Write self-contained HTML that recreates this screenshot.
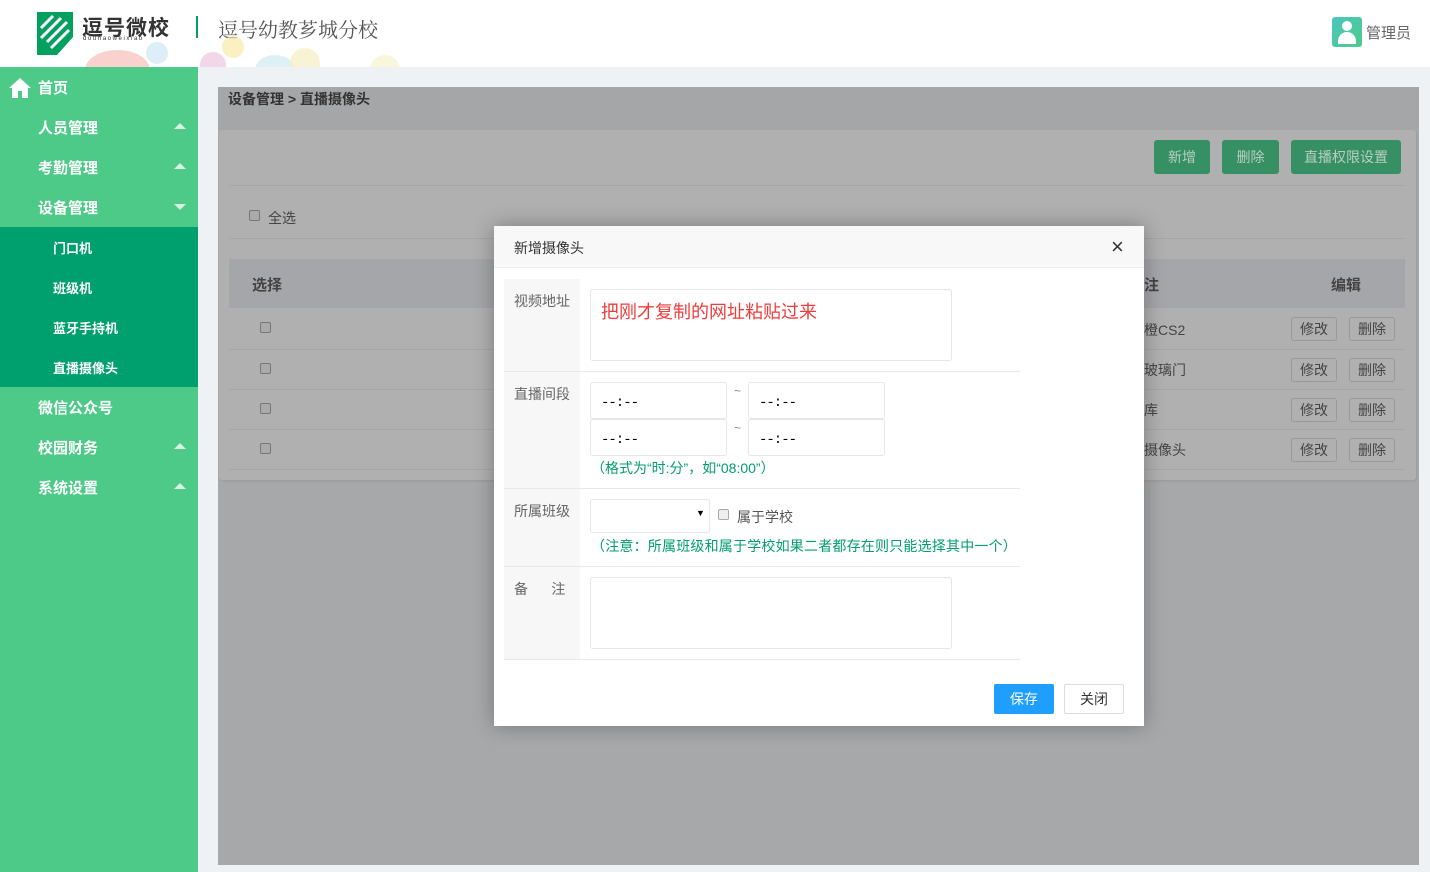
<!DOCTYPE html>
<html><head><meta charset="utf-8"><style>
*{margin:0;padding:0;box-sizing:border-box}
body{width:1430px;height:872px;overflow:hidden;background:#eef2f5;font-family:"Liberation Sans","Noto Sans CJK SC",sans-serif;position:relative;font-size:14px}
.a{position:absolute}
.top{left:0;top:0;width:1430px;height:67px;background:#fff;overflow:hidden}
.side{left:0;top:67px;width:198px;height:805px;background:#4dca88}
.side .it{position:absolute;left:38px;color:#fff;font-weight:bold;font-size:15px}
.side .sub{position:absolute;left:53px;color:#fff;font-weight:bold;font-size:13px}
.tri{position:absolute;left:174px;width:0;height:0;border-left:6px solid transparent;border-right:6px solid transparent}
.up{border-bottom:6px solid #d8efe2}
.dn{border-top:6px solid #d8efe2}
.ov{left:218px;top:87px;width:1201px;height:778px;background:#a6a8aa}
.cb{width:11px;height:11px;border:1px solid #777;border-radius:2px;background:#aaa}
.btnx{border:1px solid #999;border-radius:3px;color:#444;font-size:14px;text-align:center;line-height:22px;height:24px;width:46px}
.g{background:#369063;border-radius:3px;text-align:center;line-height:34px;height:34px;font-size:14px;color:#b8cfc0}
.modal{left:494px;top:226px;width:650px;height:500px;background:#fff;box-shadow:0 0 20px rgba(0,0,0,.3)}
.lab{position:absolute;left:10px;width:76px;background:#f7f7f7;color:#666;font-size:14px;padding:0 0 0 10px}
.inp{position:absolute;border:1px solid #e6e6e6;border-radius:3px;background:#fff}
.t{font-family:"Liberation Mono",monospace;font-size:14px;color:#000;padding:12px 0 0 10px;letter-spacing:-1px}
.hr{position:absolute;left:10px;width:516px;height:1px;background:#e8e8e8}
.green{color:#009e6e;font-size:14px;position:absolute}
</style></head><body>
<div class="a top">
<svg class="a" style="left:37px;top:12px" width="36" height="43" viewBox="0 0 36 43"><polygon points="0,0 36,0 36,25 20,43 0,43" fill="#04a060"/><path d="M4 16 L16 4 M4 26 L24 6 M10 30 L30 10 M14 36 L32 18" stroke="#fff" stroke-width="3"/></svg>
<div class="a" style="left:82px;top:12px;font-size:21px;font-weight:bold;color:#333;letter-spacing:1px">逗号微校</div>
<div class="a" style="left:83px;top:36px;font-size:6px;color:#333;letter-spacing:1.6px">douhaoweixiao</div>
<div class="a" style="left:196px;top:16px;width:2px;height:22px;background:#04a060"></div>
<div class="a" style="left:218px;top:14px;font-size:20px;color:#555;font-family:'Liberation Serif','Noto Serif CJK SC',serif">逗号幼教芗城分校</div>
<div class="a" style="left:85px;top:50px;width:65px;height:40px;border-radius:50%;background:#f5b4b0;opacity:.6"></div>
<div class="a" style="left:146px;top:42px;width:22px;height:22px;border-radius:50%;background:#cde7f5;opacity:.7"></div>
<div class="a" style="left:200px;top:52px;width:26px;height:26px;border-radius:50%;background:#ecc6e0;opacity:.7"></div>
<div class="a" style="left:222px;top:36px;width:22px;height:22px;border-radius:50%;background:#f8eaa8;opacity:.7"></div>
<div class="a" style="left:255px;top:55px;width:40px;height:30px;border-radius:50%;background:#cfe9f2;opacity:.7"></div>
<div class="a" style="left:290px;top:48px;width:30px;height:30px;border-radius:50%;background:#f5f0c0;opacity:.7"></div>
<div class="a" style="left:370px;top:55px;width:30px;height:30px;border-radius:50%;background:#f6f3cc;opacity:.7"></div>
<div class="a" style="left:1332px;top:17px;width:30px;height:30px;border-radius:3px;background:linear-gradient(135deg,#4cc6c0,#4dca88);overflow:hidden"><div class="a" style="left:10px;top:4px;width:10px;height:10px;border-radius:50%;background:#fff"></div><div class="a" style="left:6px;top:15px;width:18px;height:12px;border-radius:9px 9px 0 0;background:#fff"></div></div>
<div class="a" style="left:1366px;top:22px;font-size:15px;color:#666">管理员</div>
</div>
<div class="a side">
<svg class="a" style="left:8px;top:10px" width="24" height="22" viewBox="0 0 24 22"><path d="M12 1 L1 11 L4 11 L4 21 L10 21 L10 14 L14 14 L14 21 L20 21 L20 11 L23 11 Z" fill="#fff"/></svg>
<div class="it" style="top:10px">首页</div>
<div class="it" style="top:50px">人员管理</div><div class="tri up" style="top:56px"></div>
<div class="it" style="top:90px">考勤管理</div><div class="tri up" style="top:96px"></div>
<div class="it" style="top:130px">设备管理</div><div class="tri dn" style="top:137px"></div>
<div class="a" style="left:0;top:160px;width:198px;height:160px;background:#00a06e"></div>
<div class="sub" style="top:171px">门口机</div>
<div class="sub" style="top:211px">班级机</div>
<div class="sub" style="top:251px">蓝牙手持机</div>
<div class="sub" style="top:291px">直播摄像头</div>
<div class="it" style="top:330px">微信公众号</div>
<div class="it" style="top:370px">校园财务</div><div class="tri up" style="top:376px"></div>
<div class="it" style="top:410px">系统设置</div><div class="tri up" style="top:416px"></div>
</div>
<div class="a ov">
<div class="a" style="left:0;top:0;width:1201px;height:42px;background:#a4a6a8"></div>
<div class="a" style="left:10px;top:2px;font-size:14px;font-weight:bold;color:#333">设备管理 &gt; 直播摄像头</div>
<div class="a" style="left:1px;top:43px;width:1197px;height:350px;background:#b0b0b0;border-radius:3px;box-shadow:1px 1px 2px #999"></div>
<div class="a g" style="left:936px;top:53px;width:56px">新增</div>
<div class="a g" style="left:1004px;top:53px;width:57px">删除</div>
<div class="a g" style="left:1073px;top:53px;width:110px">直播权限设置</div>
<div class="a" style="left:11px;top:98px;width:1176px;height:1px;background:#a6a6a6"></div>
<div class="a cb" style="left:31px;top:123px"></div>
<div class="a" style="left:50px;top:121px;color:#444">全选</div>
<div class="a" style="left:11px;top:151px;width:1176px;height:1px;background:#a6a6a6"></div>
<div class="a" style="left:11px;top:172px;width:1176px;height:49px;background:#a5a6a9"></div>
<div class="a" style="left:34px;top:187px;font-weight:bold;color:#444;font-size:15px">选择</div>
<div class="a" style="left:926px;top:187px;font-weight:bold;color:#444;font-size:15px">注</div>
<div class="a" style="left:1113px;top:187px;font-weight:bold;color:#444;font-size:15px">编辑</div>
<div class="a" style="left:11px;top:262px;width:1176px;height:1px;background:#a6a6a6"></div>
<div class="a" style="left:11px;top:302px;width:1176px;height:1px;background:#a6a6a6"></div>
<div class="a" style="left:11px;top:342px;width:1176px;height:1px;background:#a6a6a6"></div>
<div class="a" style="left:11px;top:382px;width:1176px;height:1px;background:#a6a6a6"></div>
<div class="a cb" style="left:42px;top:235px"></div><div class="a cb" style="left:42px;top:276px"></div><div class="a cb" style="left:42px;top:316px"></div><div class="a cb" style="left:42px;top:356px"></div>
<div class="a" style="left:926px;top:233px;color:#444">橙CS2</div>
<div class="a" style="left:926px;top:273px;color:#444">玻璃门</div>
<div class="a" style="left:926px;top:313px;color:#444">库</div>
<div class="a" style="left:926px;top:353px;color:#444">摄像头</div>
<div class="a btnx" style="left:1073px;top:230px">修改</div><div class="a btnx" style="left:1131px;top:230px">删除</div>
<div class="a btnx" style="left:1073px;top:271px">修改</div><div class="a btnx" style="left:1131px;top:271px">删除</div>
<div class="a btnx" style="left:1073px;top:311px">修改</div><div class="a btnx" style="left:1131px;top:311px">删除</div>
<div class="a btnx" style="left:1073px;top:351px">修改</div><div class="a btnx" style="left:1131px;top:351px">删除</div>
</div>
<div class="a modal">
<div class="a" style="left:0;top:0;width:650px;height:42px;background:#f8f8f8;border-bottom:1px solid #eee"></div>
<div class="a" style="left:20px;top:12px;color:#333">新增摄像头</div>
<div class="a" style="left:617px;top:8px;font-size:22px;color:#333">×</div>
<div class="lab" style="top:53px;height:92px;padding-top:12px">视频地址</div>
<div class="inp" style="left:96px;top:63px;width:362px;height:72px"></div>
<div class="a" style="left:107px;top:72px;color:#f03c3c;font-size:18px">把刚才复制的网址粘贴过来</div>
<div class="hr" style="top:145px"></div>
<div class="lab" style="top:146px;height:116px;padding-top:12px">直播间段</div>
<div class="inp t" style="left:96px;top:156px;width:137px;height:37px">--:--</div>
<div class="a" style="left:240px;top:158px;color:#888;font-size:12px">~</div>
<div class="inp t" style="left:254px;top:156px;width:137px;height:37px">--:--</div>
<div class="inp t" style="left:96px;top:193px;width:137px;height:37px">--:--</div>
<div class="a" style="left:240px;top:195px;color:#888;font-size:12px">~</div>
<div class="inp t" style="left:254px;top:193px;width:137px;height:37px">--:--</div>
<div class="green" style="left:97px;top:232px">（格式为“时:分”，如“08:00”）</div>
<div class="hr" style="top:262px"></div>
<div class="lab" style="top:263px;height:77px;padding-top:12px">所属班级</div>
<div class="inp" style="left:96px;top:273px;width:120px;height:34px"></div>
<div class="a" style="left:202px;top:282px;font-size:9px">▼</div>
<div class="a cb" style="left:224px;top:283px;background:#eee;border-color:#aaa"></div>
<div class="a" style="left:243px;top:281px;color:#555">属于学校</div>
<div class="green" style="left:97px;top:310px;letter-spacing:0.2px">（注意：所属班级和属于学校如果二者都存在则只能选择其中一个）</div>
<div class="hr" style="top:340px"></div>
<div class="lab" style="top:341px;height:92px;padding-top:12px">备&nbsp;&nbsp;&nbsp;&nbsp;&nbsp;&nbsp;注</div>
<div class="inp" style="left:96px;top:351px;width:362px;height:72px"></div>
<div class="hr" style="top:433px"></div>
<div class="a" style="left:500px;top:458px;width:60px;height:30px;background:#1e9fff;color:#fff;text-align:center;line-height:30px;border-radius:2px">保存</div>
<div class="a" style="left:570px;top:458px;width:60px;height:30px;border:1px solid #ddd;color:#333;text-align:center;line-height:28px;border-radius:2px">关闭</div>
</div>
</body></html>
